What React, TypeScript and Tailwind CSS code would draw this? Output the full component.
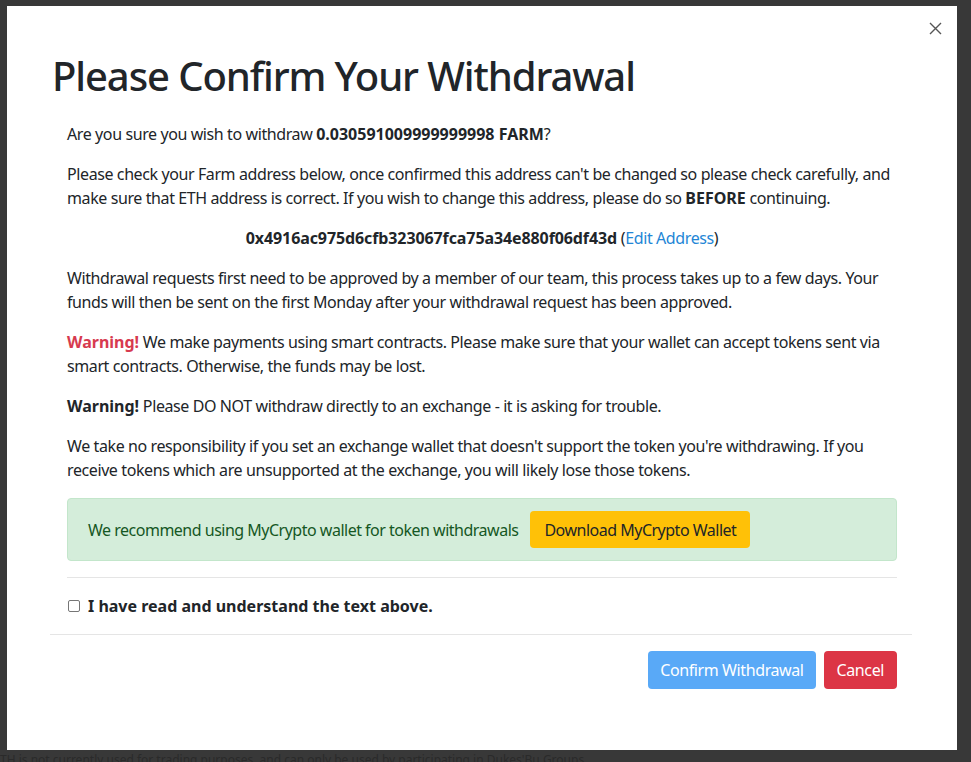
import React from "react";

export default function App() {
  return (
    <div
      className="w-[971px] h-[762px] overflow-hidden bg-[#383838] pt-[6px] pl-[7px] text-[#212529]"
      style={{ fontFamily: '"Noto Sans", "Open Sans", Arial, sans-serif' }}
    >
      <div className="relative flex h-[744px] w-[950px] flex-col bg-white">
        <button className="absolute right-[12px] top-[12px] flex h-[20px] w-[20px] items-center justify-center text-[#555]">
          <svg width="13" height="13" viewBox="0 0 13 13" fill="none" stroke="currentColor" strokeWidth="1.4">
            <path d="M1 1L12 12M12 1L1 12" />
          </svg>
        </button>

        <div className="pl-[45px] pt-[46px]">
          <h1 className="text-[40px] font-medium leading-[48px] tracking-[-1.1px] text-[#212529]">
            Please Confirm Your Withdrawal
          </h1>
        </div>

        <div className="mt-[22px] px-[60px] text-[16px] leading-[24px] tracking-[-0.4px]">
          <p className="mb-4">
            Are you sure you wish to withdraw <b className="tracking-normal">0.030591009999999998 FARM</b>?
          </p>
          <p className="mb-4">
            Please check your Farm address below, once confirmed this address can't be changed so please check carefully, and make sure that ETH address is correct. If you wish to change this address, please do so <b className="tracking-normal">BEFORE</b> continuing.
          </p>
          <p className="mb-4 text-center">
            <b className="tracking-[-0.1px]">0x4916ac975d6cfb323067fca75a34e880f06df43d</b> (<span className="text-[#2386d6]">Edit Address</span>)
          </p>
          <p className="mb-4">
            Withdrawal requests first need to be approved by a member of our team, this process takes up to a few days. Your funds will then be sent on the first Monday after your withdrawal request has been approved.
          </p>
          <p className="mb-4">
            <b className="tracking-normal text-[#d73a4f]">Warning!</b> We make payments using smart contracts. Please make sure that your wallet can accept tokens sent via smart contracts. Otherwise, the funds may be lost.
          </p>
          <p className="mb-4">
            <b className="tracking-normal">Warning!</b> Please DO NOT withdraw directly to an exchange - it is asking for trouble.
          </p>
          <p className="mb-4">
            We take no responsibility if you set an exchange wallet that doesn't support the token you're withdrawing. If you receive tokens which are unsupported at the exchange, you will likely lose those tokens.
          </p>

          <div className="mb-4 flex items-center gap-[12px] rounded-[4px] border border-[#c3e6cb] bg-[#d4edda] px-[20px] py-[12px] tracking-[-0.5px] text-[#155724]">
            <span>We recommend using MyCrypto wallet for token withdrawals</span>
            <button className="h-[37px] rounded-[4px] bg-[#ffc107] px-[14px] tracking-[-0.5px] text-[#212529]">
              Download MyCrypto Wallet
            </button>
          </div>

          <div className="h-px bg-[#e5e5e5]" />

          <label className="mt-4 mb-4 flex items-center gap-[8px] font-bold tracking-normal">
            <span className="ml-[1px] inline-block h-[12px] w-[12px] rounded-[2px] border border-[#767676] bg-white" />
            I have read and understand the text above.
          </label>
        </div>

        <div className="ml-[43px] mr-[45px] flex justify-end gap-[8px] border-t border-[#e5e5e5] pt-[16px] pr-[15px] text-[16px] tracking-[-0.4px]">
          <button className="h-[38px] rounded-[4px] bg-[#59a9f7] px-[12px] text-white">Confirm Withdrawal</button>
          <button className="h-[38px] rounded-[4px] bg-[#dc3545] px-[13px] text-white">Cancel</button>
        </div>
      </div>
      <div className="ml-[-7px] mt-[2px] h-[12px] whitespace-nowrap text-[12px] leading-[16px] text-[#2a2a2a]">
        TH is not currently used for trading purposes, and can only be used by participating in Dukes'Bu Groups
      </div>
    </div>
  );
}
